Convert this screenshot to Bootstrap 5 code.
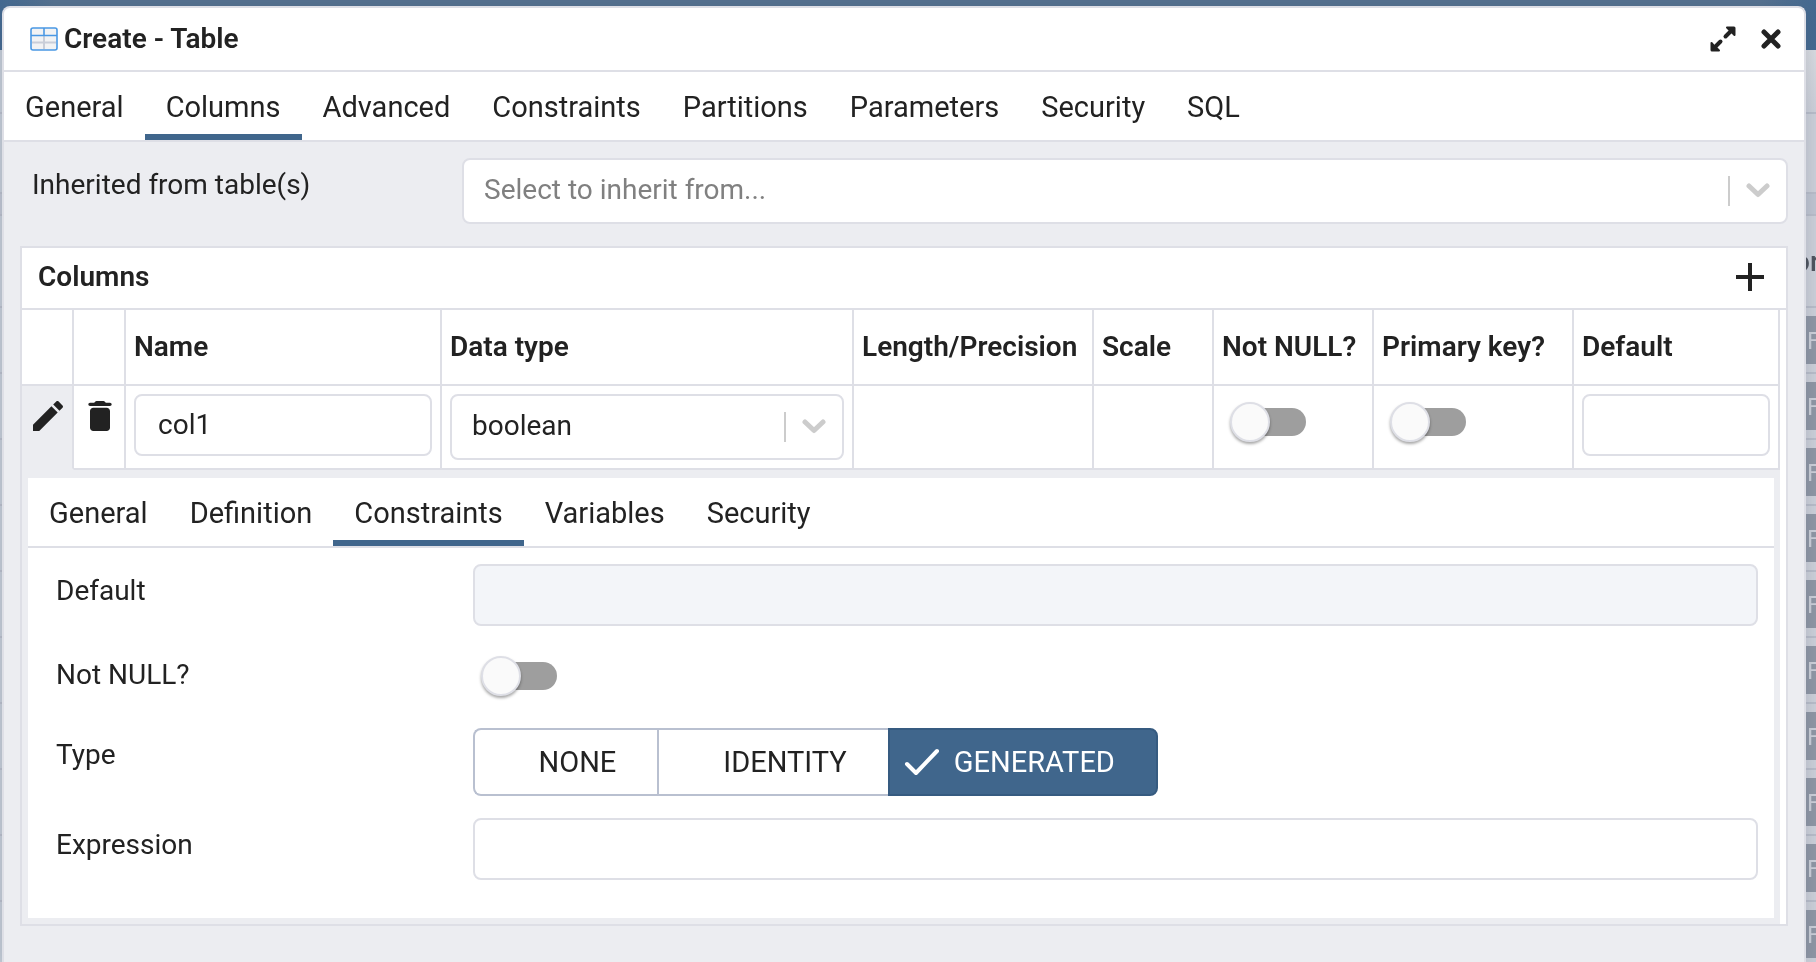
<!DOCTYPE html>
<html lang="en">
<head>
<meta charset="utf-8">
<meta name="viewport" content="width=device-width, initial-scale=1">
<title>Create - Table</title>
<link href="https://cdn.jsdelivr.net/npm/bootstrap@5.3.0/dist/css/bootstrap.min.css" rel="stylesheet">
<style>
  :root { --line: #dedfe6; --panel: #ecedf1; --ink: #222222; --accent: #40668c; --mute: #cccccc; }
  body { font-family: Roboto, "Liberation Sans", sans-serif; font-size: 28px; line-height: 36px; color: var(--ink); background: #cdd0d9; }

  /* application behind the dialog */
  .backdrop-app { z-index: 0; }
  .app-bar { height: 50px; background: linear-gradient(90deg, #456a91, #567290 3%, #567290 97%, #456a91); }
  .app-left { width: 40px; background: #c5ccd6; }
  .app-right { width: 28px; background: linear-gradient(#d9dbe0, #cdd0d9 60px); }
  .app-strip { border-bottom: 2px solid #b9bdc9; }
  .strip-a { height: 64px; }
  .strip-b { height: 80px; }
  .strip-c { height: 22px; background: #c0c5d1; }
  .strip-d { height: 92px; }
  .strip-row { height: 66px; padding: 8px 0 8px 16px; }
  .app-right .app-key { height: 48px; background: #9097a5; color: #cdd0d9; font-size: 24px; line-height: 50px; padding-left: 3px; }
  .app-right .app-head { font-size: 28px; font-weight: 500; color: #4f545d; padding: 28px 0 0 6px; }

  /* dialog */
  .dialog-wrap { padding: 6px 10px 0 2px; z-index: 1; }
  .dialog { border: 2px solid var(--line); border-bottom: 0; border-radius: 8px 8px 0 0; background: var(--panel); box-shadow: 0 4px 20px rgba(40, 60, 90, .18); }
  .dialog-head { height: 64px; border-bottom: 2px solid var(--line); padding: 0 22px 0 26px; }
  .dialog-title { font-size: 28px; line-height: 36px; font-weight: 600; margin-left: 6px; }
  .icon-btn { border: 0; background: none; padding: 0; color: var(--ink); line-height: 0; }

  .tabs { height: 70px; background: #fff; border-bottom: 2px solid var(--line); }
  .tabs button { border: 0; border-bottom: 6px solid transparent; border-top: 8px solid transparent; background: none; padding: 0 21px; color: var(--ink); font-size: 29px; }
  .tabs button.active { border-bottom-color: var(--accent); }

  .form-line { display: grid; grid-template-columns: 25% 1fr; }
  .form-line > label, .form-line > .line-label { padding: 9px 12px 0; }
  .field { border: 2px solid var(--line); border-radius: 8px; height: 62px; padding: 0 22px 2px; font-size: 28px; color: var(--ink); background: #fff; width: 100%; }
  .field:disabled { background: #f3f5f9; }
  select.field { height: 66px; padding: 0 70px 2px 20px; appearance: none; display: block; }
  select.pale { color: #808080; }
  .pick-end { top: 0; bottom: 0; right: 0; gap: 16px; padding-right: 18px; pointer-events: none; }
  .pick-end i { width: 2px; height: 30px; background: var(--mute); }

  .toggle { appearance: none; display: block; position: relative; width: 76px; height: 40px; margin: 8px; border: 0; background: none; }
  .toggle::before { content: ""; position: absolute; inset: 6px 0 6px 8px; border-radius: 14px; background: #9e9e9e; }
  .toggle::after { content: ""; position: absolute; left: 0; top: 0; width: 40px; height: 40px; border-radius: 50%; background: #fafafa; border: 2px solid var(--line); box-shadow: 0 2px 3px rgba(0, 0, 0, .35); }
  .toggle:checked::after { left: 36px; }

  .grid-panel { margin-top: 22px; border: 2px solid var(--line); background: #fff; }
  .grid-title { height: 62px; padding: 0 22px 2px 16px; border-bottom: 2px solid var(--line); font-weight: 600; }
  .data-grid { width: calc(100% - 6px); table-layout: fixed; border-collapse: separate; border-spacing: 0; }
  .data-grid th { height: 76px; padding: 0 6px 0 8px; font-weight: 600; vertical-align: middle; white-space: nowrap; border: 0 solid var(--line); border-width: 0 2px 2px 0; }
  .data-grid td { height: 84px; padding: 8px 8px 0; vertical-align: top; border: 0 solid var(--line); border-width: 0 2px 2px 0; }
  .data-grid td.act { padding: 10px 0 0 2px; text-align: center; }
  .data-grid td.open { background: var(--panel); border-bottom-color: var(--panel); }
  .data-grid td.detail { height: auto; padding: 8px 6px 6px; background: var(--panel); border: 0; }
  .detail-form { background: #fff; padding: 16px 16px 38px; gap: 22px; }
  .w-act { width: 52px; } .w-name { width: 316px; } .w-type { width: 412px; } .w-len { width: 240px; }
  .w-scale { width: 120px; } .w-null { width: 160px; } .w-key { width: 200px; }
  .switch-line { height: 58px; }

  .kind { border: 2px solid #b9c0d0; color: var(--ink); background: #fff; border-radius: 8px; font-size: 29px; line-height: 36px; height: 68px; padding: 0 41px 0 14px; display: flex; align-items: center; gap: 14px; }
  .kind svg { visibility: hidden; }
  .btn-check:checked + .kind { background: var(--accent); color: #fff; border-color: #365b80; }
  .btn-check:checked + .kind svg { visibility: visible; }
</style>
</head>
<body class="vh-100 overflow-hidden">

<div class="backdrop-app position-fixed top-0 bottom-0 start-0 end-0 d-flex flex-column overflow-hidden" aria-hidden="true">
  <div class="app-bar flex-shrink-0"></div>
  <div class="d-flex justify-content-between flex-grow-1">
    <div class="app-left">
      <div class="app-strip strip-a"></div><div class="app-strip strip-b"></div><div class="app-strip strip-c"></div><div class="app-strip strip-d"></div>
      <div class="app-strip strip-row"></div><div class="app-strip strip-row"></div><div class="app-strip strip-row"></div><div class="app-strip strip-row"></div><div class="app-strip strip-row"></div><div class="app-strip strip-row"></div><div class="app-strip strip-row"></div><div class="app-strip strip-row"></div><div class="app-strip strip-row"></div>
    </div>
    <div class="app-right overflow-hidden">
      <div class="app-strip strip-a"></div><div class="app-strip strip-b"></div><div class="app-strip strip-c"></div>
      <div class="app-strip strip-d app-head">or</div>
      <div class="app-strip strip-row"><div class="app-key">F</div></div>
      <div class="app-strip strip-row"><div class="app-key">F</div></div>
      <div class="app-strip strip-row"><div class="app-key">F</div></div>
      <div class="app-strip strip-row"><div class="app-key">F</div></div>
      <div class="app-strip strip-row"><div class="app-key">F</div></div>
      <div class="app-strip strip-row"><div class="app-key">F</div></div>
      <div class="app-strip strip-row"><div class="app-key">F</div></div>
      <div class="app-strip strip-row"><div class="app-key">F</div></div>
      <div class="app-strip strip-row"><div class="app-key">F</div></div>
      <div class="app-strip strip-row"><div class="app-key">F</div></div>
    </div>
  </div>
</div>

<div class="dialog-wrap position-relative d-flex flex-column h-100">
  <section class="dialog flex-grow-1 overflow-hidden" role="dialog" aria-labelledby="dlg-title">
    <header class="dialog-head bg-white d-flex align-items-center">
      <svg width="28" height="24" viewBox="0 0 28 24" fill="none" aria-hidden="true">
        <rect x="1" y="1" width="26" height="22" rx="2" fill="#f2f3f4"/>
        <path d="M14 9v13M2 15.500h24" stroke="#c9ced8" stroke-width="2"/>
        <path d="M14 1v8M1 8.500h26" stroke="#4a98e4" stroke-width="1.600"/>
        <rect x="1" y="1" width="26" height="22" rx="2" stroke="#4a98e4" stroke-width="1.600"/>
      </svg>
      <h1 class="dialog-title mb-0 flex-grow-1" id="dlg-title">Create - Table</h1>
      <div class="d-flex align-items-center gap-4">
        <button type="button" class="icon-btn" aria-label="Maximize">
          <svg width="26" height="26" viewBox="0 0 26 26" fill="currentColor" stroke="currentColor" aria-hidden="true">
            <path d="M17 1.500h7q.5 0 .5.500v7l-2.500-2.500-2-2z M1.500 17v7q0 .5.500.5h7l-2.500-2.500-2.500-2z" stroke-width="2" stroke-linejoin="round"/>
            <path d="M15.500 10.500l5.500-5.500M10.500 15.500l-5.500 5.500" stroke-width="4" stroke-linecap="round"/>
          </svg>
        </button>
        <button type="button" class="icon-btn" aria-label="Close">
          <svg width="22" height="22" viewBox="0 0 22 22" fill="none" stroke="currentColor" stroke-width="5" stroke-linecap="round" aria-hidden="true"><path d="M4 4l14 14M18 4L4 18"/></svg>
        </button>
      </div>
    </header>

    <nav class="tabs d-flex" aria-label="Table properties">
      <button type="button">General</button><button type="button" class="active">Columns</button><button type="button">Advanced</button><button type="button">Constraints</button><button type="button">Partitions</button><button type="button">Parameters</button><button type="button">Security</button><button type="button">SQL</button>
    </nav>

    <div class="p-3">
      <div class="form-line">
        <label for="inherit">Inherited from table(s)</label>
        <div class="position-relative">
          <select class="field pale" id="inherit"><option>Select to inherit from...</option></select>
          <span class="pick-end position-absolute d-flex align-items-center"><i></i><svg width="24" height="16" viewBox="0 0 24 16" fill="none" stroke="#cccccc" stroke-width="5" stroke-linecap="round" stroke-linejoin="round" aria-hidden="true"><path d="M3 3l9 8.500L21 3"/></svg></span>
        </div>
      </div>

      <div class="grid-panel">
        <div class="grid-title d-flex justify-content-between align-items-center">
          <span>Columns</span>
          <button type="button" class="icon-btn" aria-label="Add row">
            <svg width="28" height="28" viewBox="0 0 28 28" fill="none" stroke="currentColor" stroke-width="4" aria-hidden="true"><path d="M14 0v28M0 14h28"/></svg>
          </button>
        </div>
        <table class="data-grid">
          <colgroup><col class="w-act"><col class="w-act"><col class="w-name"><col class="w-type"><col class="w-len"><col class="w-scale"><col class="w-null"><col class="w-key"><col></colgroup>
          <thead>
            <tr><th></th><th></th><th>Name</th><th>Data type</th><th>Length/Precision</th><th>Scale</th><th>Not NULL?</th><th>Primary key?</th><th>Default</th></tr>
          </thead>
          <tbody>
            <tr>
              <td class="act open"><button type="button" class="icon-btn" aria-label="Edit row"><svg width="40" height="40" viewBox="0 0 24 24" fill="currentColor" aria-hidden="true"><path d="M3 17.250V21h3.750L17.810 9.940l-3.750-3.750zM20.710 7.040c.390-.390.390-1.020 0-1.410l-2.340-2.340c-.390-.390-1.020-.390-1.410 0l-1.830 1.830 3.750 3.750z"/></svg></button></td>
              <td class="act"><button type="button" class="icon-btn" aria-label="Delete row"><svg width="40" height="40" viewBox="0 0 24 24" fill="currentColor" aria-hidden="true"><path d="M6 19c0 1.100.9 2 2 2h8c1.100 0 2-.9 2-2V9c0-1.100-.9-2-2-2H8c-1.100 0-2 .9-2 2v10zM18 4h-2.500l-.71-.71c-.18-.18-.44-.29-.7-.29H9.910c-.26 0-.52.110-.7.290L8.500 4H6c-.55 0-1 .45-1 1s.45 1 1 1h12c.55 0 1-.45 1-1s-.45-1-1-1z"/></svg></button></td>
              <td><input class="field d-block" type="text" value="col1" aria-label="Name"></td>
              <td>
                <div class="position-relative">
                  <select class="field" aria-label="Data type"><option>boolean</option></select>
                  <span class="pick-end position-absolute d-flex align-items-center"><i></i><svg width="24" height="16" viewBox="0 0 24 16" fill="none" stroke="#cccccc" stroke-width="5" stroke-linecap="round" stroke-linejoin="round" aria-hidden="true"><path d="M3 3l9 8.500L21 3"/></svg></span>
                </div>
              </td>
              <td></td>
              <td></td>
              <td><input class="toggle" type="checkbox" role="switch" aria-label="Not NULL?"></td>
              <td><input class="toggle" type="checkbox" role="switch" aria-label="Primary key?"></td>
              <td><input class="field d-block" type="text" aria-label="Default"></td>
            </tr>
            <tr>
              <td class="detail" colspan="9">
                <nav class="tabs d-flex" aria-label="Column properties">
                  <button type="button">General</button><button type="button">Definition</button><button type="button" class="active">Constraints</button><button type="button">Variables</button><button type="button">Security</button>
                </nav>
                <div class="detail-form d-flex flex-column">
                  <div class="form-line">
                    <label for="c-default">Default</label>
                    <input class="field" id="c-default" type="text" disabled>
                  </div>
                  <div class="form-line switch-line">
                    <label for="c-null">Not NULL?</label>
                    <div><input class="toggle" id="c-null" type="checkbox" role="switch"></div>
                  </div>
                  <div class="form-line">
                    <span class="line-label" id="kind-label">Type</span>
                    <div class="d-flex" role="group" aria-labelledby="kind-label">
                      <input type="radio" class="btn-check" name="kind" id="k-none"><label class="kind rounded-end-0 border-end-0" for="k-none"><svg width="36" height="28" viewBox="0 0 36 28" aria-hidden="true"></svg>NONE</label>
                      <input type="radio" class="btn-check" name="kind" id="k-id"><label class="kind rounded-0 border-end-0" for="k-id"><svg width="36" height="28" viewBox="0 0 36 28" aria-hidden="true"></svg>IDENTITY</label>
                      <input type="radio" class="btn-check" name="kind" id="k-gen" checked><label class="kind rounded-start-0" for="k-gen"><svg width="36" height="28" viewBox="0 0 36 28" fill="none" stroke="currentColor" stroke-width="4" stroke-linecap="round" stroke-linejoin="round" aria-hidden="true"><path d="M3 16l9 9L33 3"/></svg>GENERATED</label>
                    </div>
                  </div>
                  <div class="form-line">
                    <label for="c-expr">Expression</label>
                    <input class="field" id="c-expr" type="text">
                  </div>
                </div>
              </td>
            </tr>
          </tbody>
        </table>
      </div>
    </div>
  </section>
</div>
<script src="https://cdn.jsdelivr.net/npm/bootstrap@5.3.0/dist/js/bootstrap.bundle.min.js"></script>
</body>
</html>
